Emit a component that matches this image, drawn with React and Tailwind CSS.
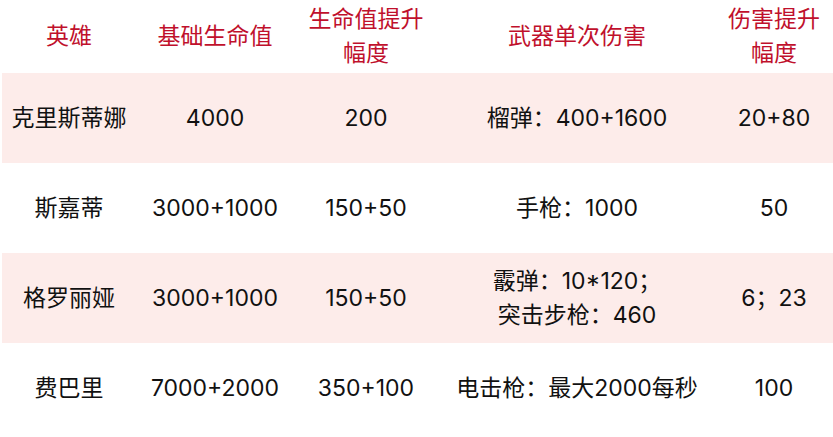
import React from "react";

const headers = [
  ["英雄"],
  ["基础生命值"],
  ["生命值提升", "幅度"],
  ["武器单次伤害"],
  ["伤害提升", "幅度"],
];

const rows = [
  { pink: true, cells: [["克里斯蒂娜"], ["4000"], ["200"], ["榴弹：400+1600"], ["20+80"]] },
  { pink: false, cells: [["斯嘉蒂"], ["3000+1000"], ["150+50"], ["手枪：1000"], ["50"]] },
  { pink: true, cells: [["格罗丽娅"], ["3000+1000"], ["150+50"], ["霰弹：10*120；", "突击步枪：460"], ["6；23"]] },
  { pink: false, cells: [["费巴里"], ["7000+2000"], ["350+100"], ["电击枪：最大2000每秒"], ["100"]] },
];

const grid = "grid grid-cols-[134px_158px_144px_278px_116px]";

export default function App() {
  return (
    <div
      className="w-[833px] h-[437px] bg-white pl-[2px] text-[23px] leading-[34px]"
      style={{ fontFamily: 'Inter, "Noto Sans CJK SC", "Noto Sans", sans-serif' }}
    >
      <div className={`${grid} h-[73px] text-[#c0102c]`}>
        {headers.map((h, i) => (
          <div key={i} className="flex flex-col items-center justify-center pb-[1px]">
            {h.map((l, j) => (
              <span key={j}>{l}</span>
            ))}
          </div>
        ))}
      </div>
      {rows.map((r, i) => (
        <div
          key={i}
          className={`${grid} h-[90px] text-[#111] ${r.pink ? "bg-[#fdecea]" : "bg-white"}`}
        >
          {r.cells.map((c, j) => (
            <div key={j} className="flex flex-col items-center justify-center">
              {c.map((l, k) => (
                <span key={k}>{l}</span>
              ))}
            </div>
          ))}
        </div>
      ))}
    </div>
  );
}
